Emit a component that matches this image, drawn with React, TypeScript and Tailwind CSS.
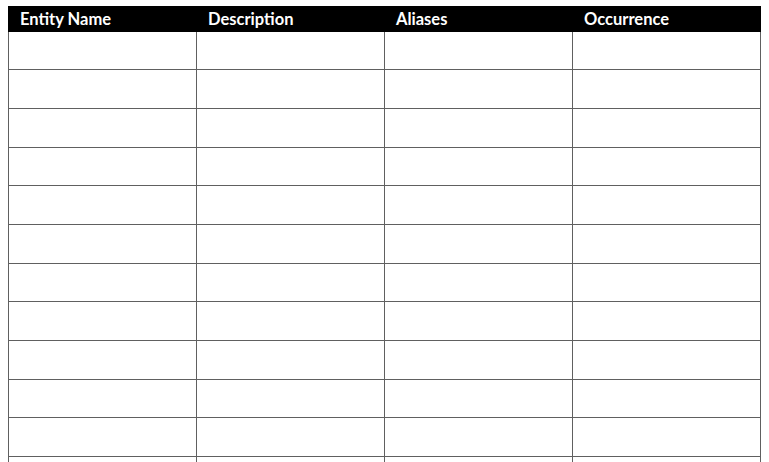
const columns = ["Entity Name", "Description", "Aliases", "Occurrence"]

// row heights incl. bottom border, as measured off the sheet
const rows = [38, 39, 39, 38, 39, 39, 38, 39, 39, 38, 39, 39]

const App = () => {
    return (
    <div className="w-[769px] h-[462px] overflow-hidden bg-white pt-[6px] pl-[8px]">
        <div className="w-[753px]">
            <div className="grid grid-cols-[189px_188px_188px_188px] h-[26px] bg-black text-white font-bold text-[16.5px] items-center pt-[1px]" style={{fontFamily: "Lato, 'Liberation Sans', sans-serif"}}>
                {columns.map((c, i) => (
                    <div key={c} className={i === 0 ? "pl-[12px]" : "pl-[11px]"}>{c}</div>
                ))}
            </div>
            {rows.map((h, r) => (
                <div key={r} className="grid grid-cols-[188px_188px_188px_188px] border-l border-b border-[#606060]" style={{height: h}}>
                    {columns.map((c) => (
                        <div key={c} className="border-r border-[#606060]"></div>
                    ))}
                </div>
            ))}
        </div>
    </div>
    );
}

export default App;
